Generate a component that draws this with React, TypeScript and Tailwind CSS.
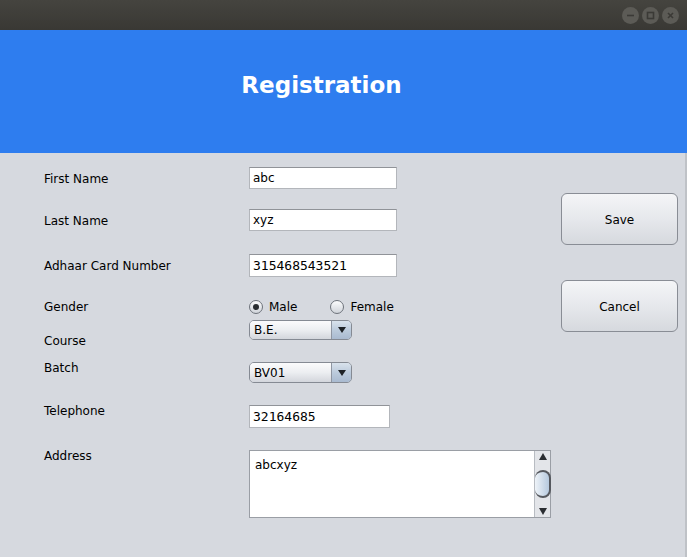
import React from "react";

const sans = { fontFamily: '"DejaVu Sans", Verdana, sans-serif' };

function TitleButton({ kind }: { kind: "min" | "max" | "close" }) {
  return (
    <div className="w-[17px] h-[17px] rounded-full bg-[#5c5b56] flex items-center justify-center">
      <svg width="11" height="11" viewBox="0 0 11 11" fill="none" stroke="#3b3a36" strokeWidth="1.6">
        {kind === "min" && <line x1="2" y1="5.5" x2="9" y2="5.5" />}
        {kind === "max" && <rect x="2.5" y="2.5" width="6" height="6" />}
        {kind === "close" && (
          <>
            <line x1="3" y1="3" x2="8" y2="8" />
            <line x1="8" y1="3" x2="3" y2="8" />
          </>
        )}
      </svg>
    </div>
  );
}

function Field({ value, w, h = 22, mono = false }: { value: string; w: number; h?: number; mono?: boolean }) {
  return (
    <div
      className="bg-white border border-[#b3b6bb] border-t-[#909398] flex items-center pl-[3px] text-black"
      style={{
        width: w,
        height: h,
        fontFamily: mono ? '"DejaVu Sans Mono", monospace' : sans.fontFamily,
        fontSize: mono ? 13 : 12,
      }}
    >
      {value}
    </div>
  );
}

function Radio({ label, checked }: { label: string; checked?: boolean }) {
  return (
    <div className="flex items-center gap-[6px] text-[12px]">
      <div className="w-[14px] h-[14px] rounded-full border border-[#6e737b] bg-gradient-to-b from-[#fcfcfd] to-[#d0d4da] flex items-center justify-center">
        {checked && <div className="w-[6px] h-[6px] rounded-full bg-[#2a2d31]" />}
      </div>
      <span>{label}</span>
    </div>
  );
}

function Combo({ value, h }: { value: string; h: number }) {
  return (
    <div
      className="w-[103px] flex rounded-[5px] border border-[#858a93] overflow-hidden text-[12px]"
      style={{ height: h }}
    >
      <div className="flex-1 flex items-center pl-[4px] bg-gradient-to-b from-[#fbfbfc] via-[#eceef1] to-[#d3d6dc]">{value}</div>
      <div className="w-[20px] border-l border-[#8f96a2] bg-gradient-to-b from-[#d9e2ec] via-[#bccbdc] to-[#a9bad0] flex items-center justify-center">
        <svg width="8" height="6" viewBox="0 0 8 6">
          <polygon points="0,0 8,0 4,6" fill="#1e2226" />
        </svg>
      </div>
    </div>
  );
}

function Btn({ label }: { label: string }) {
  return (
    <div className="w-[117px] h-[52px] rounded-[6px] border border-[#898d95] bg-gradient-to-b from-[#f4f5f7] via-[#e6e8ec] to-[#d6d9de] flex items-center justify-center pt-[1px] text-[12px] text-black">
      {label}
    </div>
  );
}

export default function App() {
  return (
    <div className="w-[687px] h-[557px] flex flex-col bg-[#d6d9df] text-black overflow-hidden" style={sans}>
      {/* title bar */}
      <div className="h-[30px] bg-gradient-to-b from-[#45443f] to-[#393834] flex items-center justify-end pr-[8px] gap-[3px]">
        <TitleButton kind="min" />
        <TitleButton kind="max" />
        <TitleButton kind="close" />
      </div>

      {/* header */}
      <div className="h-[123px] bg-[#2e7def] flex pt-[40px] justify-center pr-[44px]">
        <h1 className="text-white font-bold text-[23px] leading-[30px]">Registration</h1>
      </div>

      {/* body */}
      <div className="flex-1 flex border-r-2 border-[#bfc2c7]">
        <div className="pl-[44px] flex flex-col text-[12px] leading-[16px]">
          <div className="flex items-start mt-[14px]">
            <span className="w-[205px] mt-[4px]">First Name</span>
            <Field value="abc" w={148} />
          </div>
          <div className="flex items-start mt-[20px]">
            <span className="w-[205px] mt-[4px]">Last Name</span>
            <Field value="xyz" w={148} />
          </div>
          <div className="flex items-start mt-[23px]">
            <span className="w-[205px] mt-[4px]">Adhaar Card Number</span>
            <Field value="315468543521" w={148} h={23} mono />
          </div>
          <div className="flex items-center mt-[22px] h-[16px]">
            <span className="w-[205px]">Gender</span>
            <div className="flex gap-[33px]">
              <Radio label="Male" checked />
              <Radio label="Female" />
            </div>
          </div>
          <div className="flex items-start mt-[5px]">
            <span className="w-[205px] mt-[13px]">Course</span>
            <Combo value="B.E." h={20} />
          </div>
          <div className="flex items-start mt-[11px]">
            <span className="w-[205px]">Batch</span>
            <div className="mt-[2px]">
              <Combo value="BV01" h={21} />
            </div>
          </div>
          <div className="flex items-start mt-[20px]">
            <span className="w-[205px]">Telephone</span>
            <div className="mt-[2px]">
              <Field value="32164685" w={141} h={23} mono />
            </div>
          </div>
          <div className="flex items-start mt-[20px]">
            <span className="w-[205px]">Address</span>
            <div className="mt-[2px] w-[302px] h-[68px] flex border border-[#9a9ea5] bg-white">
              <div className="flex-1 pl-[5px] pt-[6px] text-[12px]">abcxyz</div>
              <div className="w-[16px] border-l border-[#b8bcc2] bg-[#e3e5e9] flex flex-col items-center justify-between py-[2px]">
                <svg width="8" height="7" viewBox="0 0 8 7">
                  <polygon points="4,0 8,7 0,7" fill="#2a2d31" />
                </svg>
                <div className="w-[16px] h-[28px] rounded-l-[14px] rounded-r-[14px] border-2 border-[#55585e] border-l-0 bg-gradient-to-r from-[#eef3f8] to-[#b6c9de]" />
                <svg width="8" height="7" viewBox="0 0 8 7">
                  <polygon points="0,0 8,0 4,7" fill="#2a2d31" />
                </svg>
              </div>
            </div>
          </div>
        </div>

        <div className="ml-[10px] mt-[40px] flex flex-col gap-[35px]">
          <Btn label="Save" />
          <Btn label="Cancel" />
        </div>
      </div>
    </div>
  );
}
